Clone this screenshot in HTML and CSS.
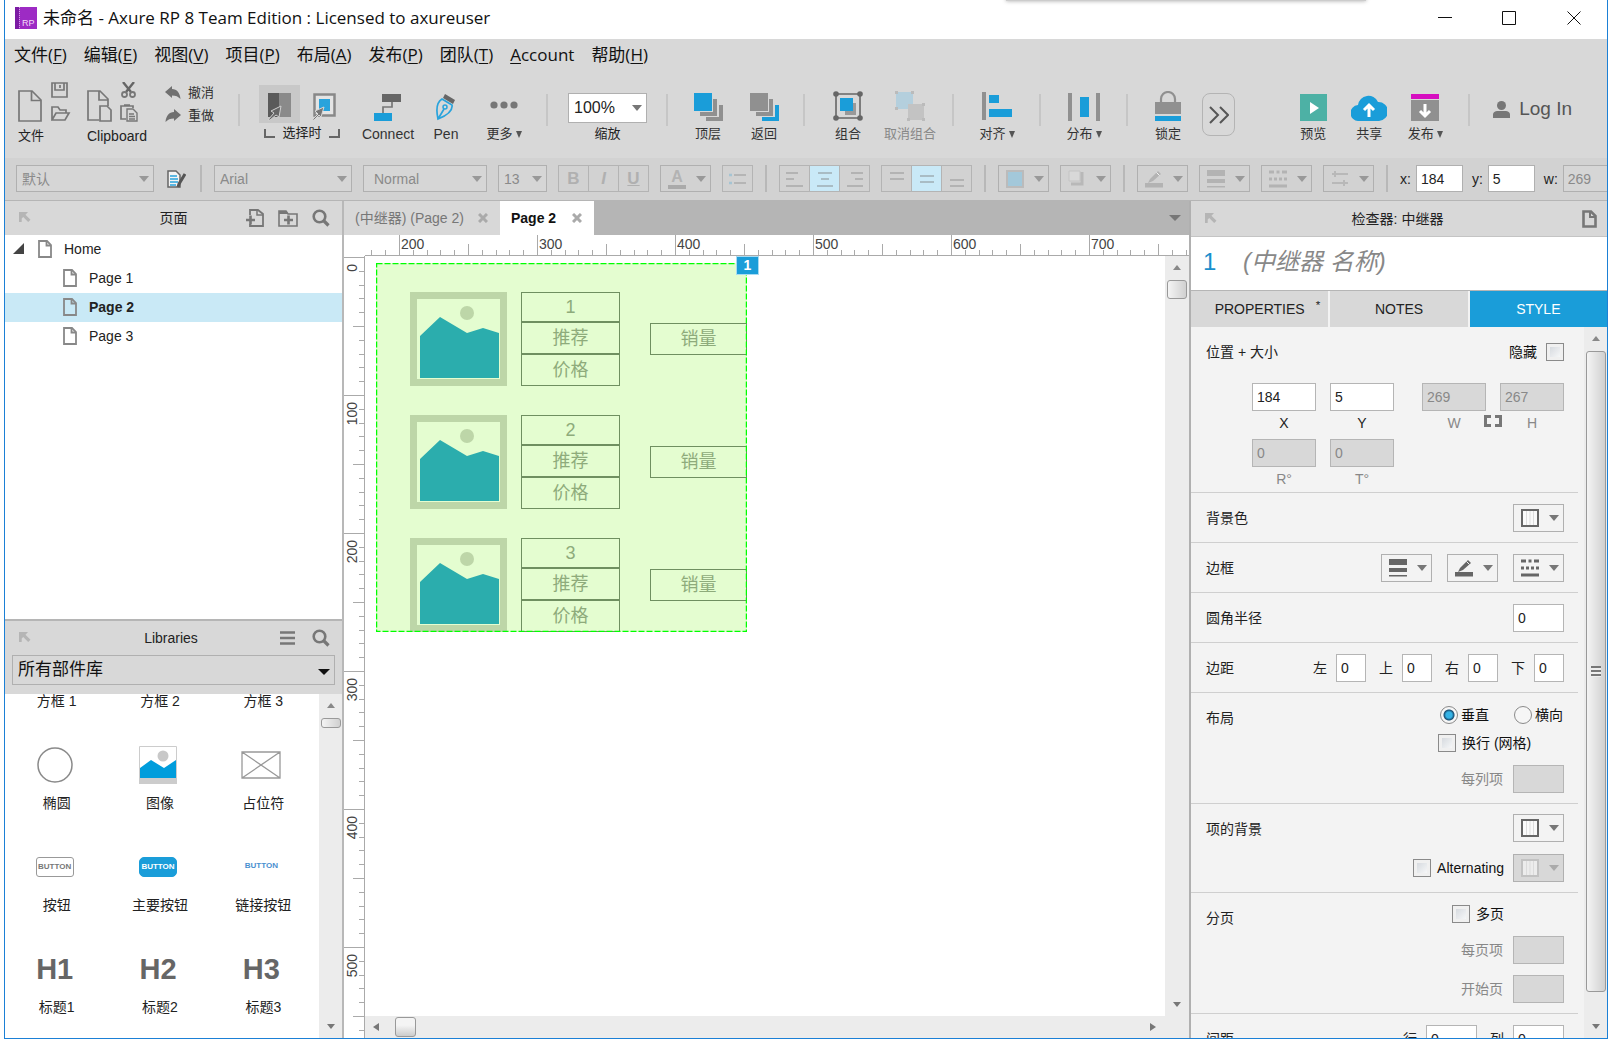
FILE: index.html
```html
<!DOCTYPE html>
<html lang="zh-CN">
<head>
<meta charset="utf-8">
<title>未命名 - Axure RP 8 Team Edition</title>
<link rel="stylesheet" href="styles.css">
</head>
<body>
<svg class="defs" width="0" height="0" aria-hidden="true">
  <defs>
    <symbol id="page" viewBox="0 0 14 18"><path d="M1 1h8l4 4v12H1z" fill="none" stroke="currentColor" stroke-width="1.800"/><path d="M8.500 1v4.500H13" fill="none" stroke="currentColor" stroke-width="1.800"/></symbol>
    <symbol id="pop" viewBox="0 0 12 12"><path d="M0 0h9L6.500 2.700l5 5-2.300 2.300-5-5L2.700 6.500V10H0z" fill="currentColor"/></symbol>
    <symbol id="search" viewBox="0 0 18 18"><circle cx="7.500" cy="7.500" r="5.800" fill="none" stroke="currentColor" stroke-width="2.600"/><path d="M11.500 11.500l5 5" stroke="currentColor" stroke-width="3.200"/></symbol>
    <symbol id="close" viewBox="0 0 10 10"><path d="M1 1l8 8M9 1l-8 8" stroke="currentColor" stroke-width="3"/></symbol>
    <symbol id="swatch" viewBox="0 0 18 18"><path d="M1 1h16v16H1z" fill="#fafafa" stroke="currentColor" stroke-width="2"/><path d="M5.500 2v14M9 2v14M12.500 2v14" stroke="#ddd"/></symbol>
    <symbol id="weights" viewBox="0 0 18 18"><path d="M0 0h18v6H0zM0 9h18v4H0zM0 16h18v1.500H0z" fill="currentColor"/></symbol>
    <symbol id="pen-line" viewBox="0 0 18 18"><path d="M0 13h18v4.500H0z" fill="currentColor"/><path d="M3 13l2-4 8-8 3 3-8 7z" fill="currentColor"/><path d="M11.500 2.500l3 3" stroke="#f3f3f3"/></symbol>
    <symbol id="dashes" viewBox="0 0 18 18"><path d="M0 2h5M7.500 2h3M13 2h5" stroke="currentColor" stroke-width="3"/><path d="M0 9h18" stroke="currentColor" stroke-width="3" stroke-dasharray="3 2"/><path d="M0 16h18" stroke="currentColor" stroke-width="3"/></symbol>
    <symbol id="photo" viewBox="0 0 97 94"><path d="M0 0h97v94H0z" fill="#bdd6a8"/><path d="M7 7h83v80H7z" fill="#e4fdd0"/><circle cx="57" cy="21" r="7" fill="#bdd6a8"/><path d="M10 44l20-19 27 16 16-5 16 5v45H10z" fill="#2badad"/></symbol>
  </defs>
</svg>

<div class="window">
  <div class="peek"></div>
  <header class="titlebar">
    <svg class="logo" width="22" height="22" viewBox="0 0 22 22"><path d="M0 0h22v22H0z" fill="#9d2bc4"/><path d="M0 0h4v22H0z" fill="#7b1ba3"/><path d="M4.500 0v22" stroke="#d79be8" stroke-dasharray="1 1"/><text x="7" y="19" font-size="9" fill="#f2dcf8">RP</text></svg>
    <h1>未命名 - Axure RP 8 Team Edition : Licensed to axureuser</h1>
    <div class="winbtns">
      <button aria-label="最小化"><svg width="14" height="14"><path d="M0 6.500h14" stroke="#111"/></svg></button>
      <button aria-label="最大化"><svg width="14" height="14"><path d="M.5.500h13v13H.5z" fill="none" stroke="#111"/></svg></button>
      <button aria-label="关闭"><svg width="14" height="14"><path d="M.5.500l13 13M13.500.500l-13 13" stroke="#111"/></svg></button>
    </div>
  </header>

  <nav class="menu">
    <a href="#">文件(<u>F</u>)</a><a href="#">编辑(<u>E</u>)</a><a href="#">视图(<u>V</u>)</a><a href="#">项目(<u>P</u>)</a><a href="#">布局(<u>A</u>)</a><a href="#">发布(<u>P</u>)</a><a href="#">团队(<u>T</u>)</a><a href="#"><u>A</u>ccount</a><a href="#">帮助(<u>H</u>)</a>
  </nav>

  <div class="toolbar">
    <div class="cluster file">
      <div class="cluster-icons">
        <svg width="24" height="32" viewBox="0 0 24 32"><path d="M1 1h13l9 9v21H1z" fill="none" stroke="#777" stroke-width="1.700"/><path d="M13.500 1v9.500H23" fill="none" stroke="#777" stroke-width="1.700"/></svg>
        <div class="pair">
          <svg width="20" height="16" viewBox="0 0 20 16"><path d="M1 1h15v14H1zM4 1v7h9V1M9 3v3" fill="none" stroke="#777" stroke-width="1.700"/></svg>
          <svg width="20" height="16" viewBox="0 0 20 16"><path d="M1 14V1h6l2 3h6v3M1 14L5 7h13l-4 7z" fill="none" stroke="#777" stroke-width="1.700"/></svg>
        </div>
      </div>
      <span>文件</span>
    </div>
    <div class="cluster clip">
      <div class="cluster-icons">
        <svg width="25" height="32" viewBox="0 0 25 32"><path d="M12 30H1V1h12l8 8v7M12 1v9h9" fill="none" stroke="#777" stroke-width="1.700"/><path d="M13 16h7l4 4v11H13z" fill="none" stroke="#777" stroke-width="1.700"/></svg>
        <div class="pair">
          <svg width="18" height="16" viewBox="0 0 18 16"><path d="M3 0l8 10M14 0L6 10" stroke="#666" stroke-width="2.400"/><circle cx="4.500" cy="12.500" r="2.500" fill="none" stroke="#777" stroke-width="1.800"/><circle cx="12.500" cy="12.500" r="2.500" fill="none" stroke="#777" stroke-width="1.800"/></svg>
          <svg width="18" height="18" viewBox="0 0 18 18"><path d="M6 15H1V2h12v2M4 1h6" fill="none" stroke="#777" stroke-width="1.700"/><path d="M7 5h6l4 4v8H7zM9 10h5M9 12.500h6M9 15h6" fill="none" stroke="#777" stroke-width="1.400"/></svg>
        </div>
      </div>
      <span>Clipboard</span>
    </div>
    <div class="history">
      <button><svg width="16" height="14" viewBox="0 0 16 14"><path d="M7 0v3c5 0 8 4 8.500 10C13 10.500 11 9.500 7 9.500V12L0 6z" fill="#707070"/></svg>撤消</button>
      <button><svg width="16" height="14" viewBox="0 0 16 14"><path d="M9 0v3C4 3 1 7 .5 13 3 10.500 5 9.500 9 9.500V12l7-6z" fill="#707070"/></svg>重做</button>
    </div>
    <i class="sep"></i>
    <div class="select-mode">
      <div class="modes">
        <button class="on" aria-label="相交选中"><svg width="24" height="28" viewBox="0 0 24 28"><path d="M0 0h11v24H0z" fill="#5a5a5a"/><path d="M11 0h12v24H11z" fill="#8a8a8a"/><path d="M0 27l6-7-3-2 10-5-2 11-3-2-6 5z" fill="#666" stroke="#d0d0d0"/></svg></button>
        <button aria-label="包含选中"><svg width="24" height="28" viewBox="0 0 24 28"><path d="M2.500 1.500h20v21h-20z" fill="#e4e4e4" stroke="#888" stroke-width="2.500"/><path d="M7 6h11v12H7z" fill="#29a3dc"/><path d="M0 27l6-6-3-3 9-4-3 10-2-2-5 5z" fill="#777" stroke="#d8d8d8"/></svg></button>
      </div>
      <div class="mode-label"><i class="lb"></i>选择时<i class="rb"></i></div>
    </div>
    <div class="tools wide">
      <button class="tool"><svg width="28" height="27" viewBox="0 0 28 27"><path d="M8 0h19v8H8z" fill="#666"/><path d="M18 8v5H9v6" fill="none" stroke="#777" stroke-width="1.700"/><path d="M0 19h18v8H0z" fill="#1a9dd9"/></svg><span class="latin">Connect</span></button>
      <button class="tool"><svg width="20" height="28" viewBox="0 0 20 28"><path d="M9 1l10 6-2 4L7 5z" fill="#666"/><path d="M6 6l10 6c1 6-4 10-14 14C0 17 1 9 6 6zM2 26l6-10" fill="none" stroke="#29a3dc" stroke-width="1.700"/><circle cx="9" cy="14" r="2" fill="none" stroke="#29a3dc" stroke-width="1.500"/></svg><span class="latin">Pen</span></button>
      <button class="tool"><svg width="28" height="20" viewBox="0 0 28 20"><g fill="#777"><circle cx="4" cy="4" r="3.600"/><circle cx="14" cy="4" r="3.600"/><circle cx="24" cy="4" r="3.600"/></g></svg><span>更多<b class="dd"></b></span></button>
    </div>
    <i class="sep"></i>
    <div class="zoom">
      <select id="zoom"><option>100%</option></select>
      <label for="zoom">缩放</label>
    </div>
    <i class="sep"></i>
    <div class="tools">
      <button class="tool"><svg width="29" height="28" viewBox="0 0 29 28"><path d="M0 0h18v18H0z" fill="#1a9dd9"/><path d="M19 6h4v17H6v-4h13zM25 12h4v16H12v-4h13z" fill="#909090"/></svg><span>顶层</span></button>
      <button class="tool"><svg width="29" height="28" viewBox="0 0 29 28"><path d="M0 0h18v18H0zM19 6h4v17H6v-4h13z" fill="#909090"/><path d="M25 12h4v16H12v-4h13z" fill="#1a9dd9"/></svg><span>返回</span></button>
    </div>
    <i class="sep"></i>
    <div class="tools broad">
      <button class="tool"><svg width="30" height="30" viewBox="0 0 30 30"><path d="M12 12h11v12H12z" fill="#999"/><path d="M7 7h13v13H7z" fill="#1a9dd9"/><path d="M3 3h24v24H3z" fill="none" stroke="#666" stroke-width="1.600"/><g fill="#666"><circle cx="3" cy="3" r="2.800"/><circle cx="27" cy="3" r="2.800"/><circle cx="3" cy="27" r="2.800"/><circle cx="27" cy="27" r="2.800"/></g></svg><span>组合</span></button>
      <button class="tool" disabled><svg width="30" height="30" viewBox="0 0 30 30"><path d="M1 1h17v17H1z" fill="#b4cfdd"/><path d="M13 13h16v16H13z" fill="#c3c3c3"/><path d="M0 0h3v3H0zM16 0h3v3h-3zM0 16h3v3H0zM27 12h3v3h-3zM27 27h3v3h-3zM12 27h3v3h-3z" fill="#bbb"/></svg><span>取消组合</span></button>
    </div>
    <i class="sep"></i>
    <div class="tools broad">
      <button class="tool"><svg width="30" height="30" viewBox="0 0 30 30"><path d="M0 1h4v28H0z" fill="#909090"/><path d="M7 4h10v8H7zM7 18h23v8H7z" fill="#1a9dd9"/></svg><span>对齐<b class="dd"></b></span></button>
    </div>
    <i class="sep"></i>
    <div class="tools broad">
      <button class="tool"><svg width="32" height="28" viewBox="0 0 32 28"><path d="M0 0h4v28H0zM28 0h4v28h-4z" fill="#909090"/><path d="M12 4h9v20h-9z" fill="#1a9dd9"/></svg><span>分布<b class="dd"></b></span></button>
    </div>
    <i class="sep"></i>
    <div class="tools">
      <button class="tool"><svg width="26" height="30" viewBox="0 0 26 30"><path d="M6 12V8a7 7 0 0 1 14 0v4" fill="none" stroke="#909090" stroke-width="2.200"/><path d="M0 11h26v12H0z" fill="#909090"/><path d="M0 25h26v5H0z" fill="#1a9dd9"/></svg><span>锁定</span></button>
    </div>
    <button class="more" aria-label="更多工具"><svg width="20" height="18" viewBox="0 0 20 18"><path d="M1 1l8 8-8 8M11 1l8 8-8 8" fill="none" stroke="#555" stroke-width="2"/></svg></button>
    <div class="tools publish">
      <button class="tool"><svg width="27" height="27" viewBox="0 0 27 27"><path d="M0 0h27v27H0z" fill="#4db1a5"/><path d="M10 8l9 6-9 6z" fill="#fff"/></svg><span>预览</span></button>
      <button class="tool"><svg width="36" height="27" viewBox="0 0 36 27"><path d="M8 27a8 8 0 0 1-1-16A10.500 10.500 0 0 1 27 8a9.500 9.500 0 0 1 1 19z" fill="#1a9dd9"/><path d="M18 23V11M13 16l5-5 5 5" fill="none" stroke="#fff" stroke-width="3"/></svg><span>共享</span></button>
      <button class="tool"><svg width="28" height="27" viewBox="0 0 28 27"><path d="M0 0h28v5H0z" fill="#d60ec0"/><path d="M0 6h28v21H0z" fill="#909090"/><path d="M14 10v12M9 17l5 5 5-5" fill="none" stroke="#fff" stroke-width="3"/></svg><span>发布<b class="dd"></b></span></button>
    </div>
    <i class="sep"></i>
    <button class="login"><svg width="17" height="17" viewBox="0 0 17 17"><circle cx="8.500" cy="4.500" r="4.500" fill="#777"/><path d="M0 17v-3c0-3 2-4 5-4h7c3 0 5 1 5 4v3z" fill="#777"/></svg>Log In</button>
  </div>

  <div class="format">
    <select class="w-style" disabled aria-label="样式"><option>默认</option></select>
    <button class="plain" aria-label="管理样式"><svg width="19" height="18" viewBox="0 0 19 18"><path d="M1 1h8l4 4v12H1z" fill="#f4f4f4" stroke="#666" stroke-width="1.500"/><path d="M3 6h7M3 9h8M3 12h8M3 15h6" stroke="#29a3dc" stroke-width="1.700"/><path d="M18 4l-6 10-1 3" stroke="#555" stroke-width="3" fill="none"/></svg></button>
    <i class="vbar"></i>
    <select class="w-style" disabled aria-label="字体"><option>Arial</option></select>
    <select class="w-weight" disabled aria-label="字型"><option>Normal</option></select>
    <select class="w-size" disabled aria-label="字号"><option>13</option></select>
    <div class="seg"><button disabled><b>B</b></button><button disabled><em>I</em></button><button disabled><u>U</u></button></div>
    <button class="drop" disabled aria-label="文字颜色"><span class="acolor">A</span></button>
    <div class="seg"><button disabled aria-label="项目符号"><svg width="18" height="14"><path d="M0 3h3M0 11h3" stroke="#a5c4d3" stroke-width="2.500"/><path d="M5 3h12M5 11h12" stroke="#b5b5b5" stroke-width="2"/></svg></button></div>
    <i class="vbar"></i>
    <div class="seg">
      <button disabled aria-label="左对齐"><svg width="18" height="18"><path d="M0 3h12M0 9h8M0 16h17" stroke="#b3b3b3" stroke-width="2"/></svg></button>
      <button class="on" disabled aria-label="居中"><svg width="18" height="18"><path d="M2 3h14M5 9h8M1 16h16" stroke="#a9bcc4" stroke-width="2"/></svg></button>
      <button disabled aria-label="右对齐"><svg width="18" height="18"><path d="M5 3h12M9 9h8M1 16h16" stroke="#b3b3b3" stroke-width="2"/></svg></button>
    </div>
    <div class="seg">
      <button disabled aria-label="顶部对齐"><svg width="18" height="18"><path d="M2 3h14M2 9h14" stroke="#b3b3b3" stroke-width="2"/></svg></button>
      <button class="on" disabled aria-label="垂直居中"><svg width="18" height="18"><path d="M2 6h14M2 12h14" stroke="#a9bcc4" stroke-width="2"/></svg></button>
      <button disabled aria-label="底部对齐"><svg width="18" height="18"><path d="M2 10h14M2 16h14" stroke="#b3b3b3" stroke-width="2"/></svg></button>
    </div>
    <i class="vbar"></i>
    <button class="drop" disabled aria-label="填充"><svg width="18" height="18"><path d="M1 1h16v16H1z" fill="#a3c8da" stroke="#bbb" stroke-width="2"/></svg></button>
    <button class="drop" disabled aria-label="阴影"><svg width="18" height="18"><path d="M1 1h11v10H1z" fill="#d8d8d8" stroke="#c4c4c4"/><path d="M3 14h11V2" fill="none" stroke="#b8b8b8" stroke-width="3"/></svg></button>
    <i class="vbar"></i>
    <button class="drop" disabled aria-label="线条颜色"><svg width="18" height="18"><use href="#pen-line"/></svg></button>
    <button class="drop" disabled aria-label="线宽"><svg width="18" height="18"><use href="#weights"/></svg></button>
    <button class="drop" disabled aria-label="线型"><svg width="18" height="18"><use href="#dashes"/></svg></button>
    <button class="drop" disabled aria-label="箭头"><svg width="18" height="18"><path d="M1 4h16M1 13h16M4 1v6M13 10v6" stroke="#b8b8b8" stroke-width="2"/></svg></button>
    <i class="vbar"></i>
    <label class="coord">x:<input value="184"></label>
    <label class="coord">y:<input value="5"></label>
    <label class="coord">w:<input value="269" disabled></label>
  </div>

  <main class="work">
    <aside class="left">
      <section class="pages">
        <div class="phead"><svg class="pop" width="12" height="12"><use href="#pop"/></svg><h2>页面</h2>
          <div class="pacts">
            <button aria-label="添加页面"><svg width="18" height="18" viewBox="0 0 18 18"><path d="M4 6V1h8l5 4v12H4v-2" fill="none" stroke="#777" stroke-width="1.800"/><path d="M11 1v5h6" fill="none" stroke="#777" stroke-width="1.500"/><path d="M0 11h9M4.500 6.500v9" stroke="#777" stroke-width="2.600"/></svg></button>
            <button aria-label="添加文件夹"><svg width="20" height="18" viewBox="0 0 20 18"><path d="M1 17V2h7l2 3h9v12z" fill="none" stroke="#777" stroke-width="1.600"/><path d="M1 2h7l2 3H1z" fill="#777"/><path d="M6 11h9M10.500 6.500v9" stroke="#777" stroke-width="2.600"/></svg></button>
            <button aria-label="搜索"><svg width="18" height="18"><use href="#search"/></svg></button>
          </div>
        </div>
        <ul class="tree">
          <li><svg class="twist" width="11" height="11"><path d="M11 0v11H0z" fill="#444"/></svg><svg width="14" height="18"><use href="#page"/></svg>Home</li>
          <li class="child"><svg width="14" height="18"><use href="#page"/></svg>Page 1</li>
          <li class="child current"><svg width="14" height="18"><use href="#page"/></svg>Page 2</li>
          <li class="child"><svg width="14" height="18"><use href="#page"/></svg>Page 3</li>
        </ul>
      </section>
      <section class="libs">
        <div class="phead"><svg class="pop" width="12" height="12"><use href="#pop"/></svg><h2>Libraries</h2>
          <div class="pacts">
            <button aria-label="菜单"><svg width="15" height="14"><path d="M0 1.500h15M0 7h15M0 12.500h15" stroke="#777" stroke-width="2.600"/></svg></button>
            <button aria-label="搜索"><svg width="18" height="18"><use href="#search"/></svg></button>
          </div>
        </div>
        <div class="libpick"><select aria-label="部件库"><option>所有部件库</option></select></div>
        <div class="libbody">
          <div class="grid">
            <span>方框 1</span><span>方框 2</span><span>方框 3</span>
            <figure><div><svg width="36" height="36"><circle cx="18" cy="18" r="17" fill="none" stroke="#8a8a8a" stroke-width="1.500"/></svg></div><figcaption>椭圆</figcaption></figure>
            <figure><div><svg width="38" height="38"><path d="M.5.500h37v37H.5z" fill="#fff" stroke="#ccc"/><circle cx="24" cy="10" r="5.500" fill="#c8c8c8"/><path d="M1 22l11-8 13 8 12-8v18H1z" fill="#009ddc"/><path d="M0 32h38v6H0z" fill="#ccc"/></svg></div><figcaption>图像</figcaption></figure>
            <figure><div><svg width="40" height="28"><path d="M1 1h38v26H1zM1 1l38 26M39 1L1 27" fill="none" stroke="#999" stroke-width="1.300"/></svg></div><figcaption>占位符</figcaption></figure>
            <figure><div><span class="bt">BUTTON</span></div><figcaption>按钮</figcaption></figure>
            <figure><div><span class="bt primary">BUTTON</span></div><figcaption>主要按钮</figcaption></figure>
            <figure><div><span class="bt link">BUTTON</span></div><figcaption>链接按钮</figcaption></figure>
            <figure><div class="hx">H1</div><figcaption>标题1</figcaption></figure>
            <figure><div class="hx">H2</div><figcaption>标题2</figcaption></figure>
            <figure><div class="hx">H3</div><figcaption>标题3</figcaption></figure>
          </div>
          <div class="vscroll"><i class="up"></i><i class="thumb small"></i><i class="down"></i></div>
        </div>
      </section>
    </aside>

    <section class="center">
      <div class="tabs">
        <div class="tab">(中继器) (Page 2)<svg width="10" height="10"><use href="#close"/></svg></div>
        <div class="tab active">Page 2<svg width="10" height="10"><use href="#close"/></svg></div>
        <i class="tri"></i>
      </div>
      <svg class="hruler" width="100%" height="21">
        <defs><pattern id="ht" x="55" width="138" height="21" patternUnits="userSpaceOnUse"><path d="M.5 0v21M69.500 9v12M14.500 15v6M28.500 15v6M41.500 15v6M55.500 15v6M83.500 15v6M97.500 15v6M110.500 15v6M124.500 15v6" stroke="#aaa"/></pattern></defs>
        <rect x="22" width="100%" height="21" fill="url(#ht)"/><path d="M21 20.500h2000" stroke="#aaa"/>
        <text x="57" y="14">200</text><text x="195" y="14">300</text><text x="333" y="14">400</text><text x="471" y="14">500</text><text x="609" y="14">600</text><text x="747" y="14">700</text>
      </svg>
      <div class="stage">
        <svg class="vruler" width="21" height="100%">
          <defs><pattern id="vt" y="1" width="21" height="138" patternUnits="userSpaceOnUse"><path d="M0 .5h21M9 69.500h12M15 14.500h6M15 28.500h6M15 41.500h6M15 55.500h6M15 83.500h6M15 97.500h6M15 110.500h6M15 124.500h6" stroke="#aaa"/></pattern></defs>
          <rect width="21" height="100%" fill="url(#vt)"/><path d="M20.500 0v2000" stroke="#aaa"/>
          <g text-anchor="end"><text transform="translate(13 8) rotate(-90)">0</text><text transform="translate(13 146) rotate(-90)">100</text><text transform="translate(13 284) rotate(-90)">200</text><text transform="translate(13 422) rotate(-90)">300</text><text transform="translate(13 560) rotate(-90)">400</text><text transform="translate(13 698) rotate(-90)">500</text></g>
        </svg>
        <div class="canvas">
          <div class="repeater">
            <div class="row"><svg width="97" height="94"><use href="#photo"/></svg><div class="cells"><span>1</span><span>推荐</span><span>价格</span></div><span class="sales">销量</span></div>
            <div class="row"><svg width="97" height="94"><use href="#photo"/></svg><div class="cells"><span>2</span><span>推荐</span><span>价格</span></div><span class="sales">销量</span></div>
            <div class="row"><svg width="97" height="94"><use href="#photo"/></svg><div class="cells"><span>3</span><span>推荐</span><span>价格</span></div><span class="sales">销量</span></div>
          </div>
          <svg class="outline" width="371" height="369"><path d="M.5.500h370v368H.5z" fill="none" stroke="#0f0" stroke-width="1.500" stroke-dasharray="6 2"/></svg>
          <span class="badge">1</span>
        </div>
        <div class="vscroll"><i class="up"></i><i class="thumb mid"></i><i class="down"></i></div>
        <div class="hscroll"><i class="lt"></i><i class="hthumb"></i><i class="rt"></i></div>
      </div>
    </section>

    <aside class="right">
      <div class="phead"><svg class="pop" width="12" height="12"><use href="#pop"/></svg><h2>检查器: 中继器</h2><div class="pacts"><button aria-label="页面"><svg width="15" height="18" viewBox="0 0 15 18"><path d="M1.500 1.500H9l4.500 4.500v10.500h-12z" fill="none" stroke="#777" stroke-width="2.600"/><path d="M8 1v6h6" fill="none" stroke="#777" stroke-width="2"/></svg></button></div></div>
      <div class="name"><span>1</span><input aria-label="名称" placeholder="(中继器 名称)"></div>
      <div class="itabs"><button>PROPERTIES<sup>*</sup></button><button>NOTES</button><button class="on">STYLE</button></div>
      <div class="ibody">
        <div class="props">
          <section class="pos">
            <div class="line"><h3>位置 + 大小</h3><label class="ck">隐藏<input type="checkbox"></label></div>
            <div class="dims">
              <label><input value="184">X</label><label><input value="5">Y</label><label class="off"><input value="269" disabled>W</label><label class="off"><input value="267" disabled>H</label>
              <svg class="chain" width="18" height="12"><path d="M7 1.500H1.500v9H7M11 1.500h5.500v9H11" fill="none" stroke="#777" stroke-width="3"/></svg>
              <label class="off"><input value="0" disabled>R°</label><label class="off"><input value="0" disabled>T°</label>
            </div>
          </section>
          <section class="line"><h3>背景色</h3><button class="drop" aria-label="背景色"><svg width="18" height="18"><use href="#swatch"/></svg></button></section>
          <section class="line"><h3>边框</h3><button class="drop" aria-label="线宽"><svg width="18" height="18"><use href="#weights"/></svg></button><button class="drop" aria-label="线条颜色"><svg width="18" height="18"><use href="#pen-line"/></svg></button><button class="drop" aria-label="线型"><svg width="18" height="18"><use href="#dashes"/></svg></button></section>
          <section class="line"><h3><label for="radius">圆角半径</label></h3><input id="radius" class="box" value="0"></section>
          <section class="line"><h3>边距</h3><label class="edge">左<input value="0"></label><label class="edge">上<input value="0"></label><label class="edge">右<input value="0"></label><label class="edge">下<input value="0"></label></section>
          <section class="multi"><h3>布局</h3>
            <div class="opts">
              <div class="radios"><label class="ck"><input type="radio" name="dir" checked>垂直</label><label class="ck"><input type="radio" name="dir">横向</label></div>
              <label class="ck wrap"><input type="checkbox">换行 (网格)</label>
              <label class="off perrow">每列项<input class="box" disabled></label>
            </div>
          </section>
          <section class="multi"><h3>项的背景</h3>
            <div class="opts alt">
              <button class="drop" aria-label="项的背景"><svg width="18" height="18"><use href="#swatch"/></svg></button>
              <div class="altrow"><label class="ck"><input type="checkbox">Alternating</label><button class="drop" disabled aria-label="交替背景"><svg width="18" height="18" opacity="0.600"><use href="#swatch"/></svg></button></div>
            </div>
          </section>
          <section class="multi"><h3>分页</h3>
            <div class="opts paging">
              <label class="ck"><input type="checkbox">多页</label>
              <label class="off perrow">每页项<input class="box" disabled></label>
              <label class="off perrow">开始页<input class="box" disabled></label>
            </div>
          </section>
          <section class="line"><h3>间距</h3><label class="edge">行<input class="box" value="0"></label><label class="edge">列<input class="box" value="0"></label></section>
        </div>
        <div class="vscroll"><i class="up"></i><i class="thumb long"></i><i class="down"></i></div>
      </div>
    </aside>
  </main>
</div>
</body>
</html>
```
FILE: styles.css
```css
* { box-sizing: border-box; }
body {
  margin: 0;
  height: 100vh;
  padding: 0 8px 14px 4px;
  background: #fff;
  color: #222;
  font: 14px/20px "Liberation Sans", "Noto Sans CJK SC", sans-serif;
  overflow: hidden;
}
h1, h2, h3, ul, figure { margin: 0; padding: 0; font-weight: normal; font-size: inherit; }
button, input, select { font: inherit; color: inherit; margin: 0; padding: 0; border: 0; background: none; border-radius: 0; }
svg { display: block; flex: none; }
.defs { position: absolute; }
.window {
  position: relative;
  display: flex;
  flex-direction: column;
  height: 100%;
  border: 1px solid #1b80d6;
  border-top: 0;
  overflow: hidden;
}
.peek { position: absolute; top: -4px; left: 62.500%; width: 360px; height: 5px; background: #ccc; box-shadow: 0 0 4px #aaa; }

/* title and menu */
.titlebar { display: flex; align-items: center; flex: none; height: 39px; padding: 0 0 4px 10px; background: #fff; color: #111; }
.titlebar h1 { flex: 1; margin-left: 6px; font: 17px/24px "Open Sans", "Noto Sans CJK SC", sans-serif; }
.winbtns { display: flex; }
.winbtns button { display: grid; place-items: center; width: 64px; height: 35px; }
.winbtns button:last-child { width: 66px; }
.menu { display: flex; flex: none; gap: 17px; height: 32px; padding-left: 9px; align-items: center; background: #d8d8d8; font: 17px/24px "Open Sans", "Noto Sans CJK SC", sans-serif; }
.menu a { color: #111; text-decoration: none; }
.menu u { text-underline-offset: 2px; }

/* main toolbar */
.toolbar { display: flex; flex: none; height: 87px; padding-left: 13px; background: #d8d8d8; font-size: 13px; overflow: hidden; }
.toolbar > * { flex: none; }
.cluster { padding-top: 11px; }
.cluster > span { display: block; line-height: 18px; margin-top: 5px; }
.cluster-icons { display: flex; gap: 9px; align-items: flex-end; height: 40px; }
.pair { display: flex; flex-direction: column; justify-content: space-between; height: 40px; }
.file { width: 69px; }
.clip { width: 78px; font-size: 14px; }
.clip .cluster-icons { gap: 8px; }
.history { display: flex; flex-direction: column; gap: 3px; width: 62px; padding-top: 12px; }
.history button { display: flex; align-items: center; gap: 7px; height: 20px; color: #333; }
.sep { width: 2px; height: 32px; margin: 23px 12px 0 11px; background: #c6c6c6; }
.select-mode { width: 107px; padding: 14px 14px 0 7px; }
.modes { display: flex; gap: 3px; }
.modes button { display: grid; place-items: center; width: 41px; height: 38px; padding-top: 6px; }
.modes .on { background: #c8c8c8; }
.mode-label { display: flex; justify-content: center; align-items: center; gap: 7px; width: 86px; line-height: 20px; }
.mode-label i { width: 11px; height: 9px; border-bottom: 2px solid #666; }
.lb { border-left: 2px solid #666; }
.rb { border-right: 2px solid #666; }
.tools { display: flex; }
.tool { display: flex; flex-direction: column; align-items: center; justify-content: flex-end; width: 56px; height: 72px; padding: 0; color: #333; }
.tool span { line-height: 18px; margin-top: 4px; white-space: nowrap; }
.tool:disabled span { color: #888; }
.wide { padding-right: 2px; }
.wide .tool { width: 58px; }
.broad .tool { width: 62px; }
.latin { font-size: 14px; }
.dd { display: inline-block; margin-left: 3px; border: 3px solid transparent; border-top: 7px solid #555; border-bottom: 0; }
.zoom { display: flex; flex-direction: column; align-items: center; gap: 1px; padding: 22px 8px 0; }
.zoom label { line-height: 20px; }
select { appearance: none; border: 1px solid #b0b0b0; }
.zoom select { width: 79px; height: 30px; padding-left: 5px; font-size: 16px; background: #fff url("data:image/svg+xml,%3Csvg xmlns='http://www.w3.org/2000/svg' width='10' height='6'%3E%3Cpath d='M0 0h10L5 6z' fill='%23777'/%3E%3C/svg%3E") no-repeat right 4px center; }
.more { align-self: flex-start; display: grid; place-items: center; width: 33px; height: 43px; margin: 22px 0 0 6px; border: 1px solid #b4b4b4; border-radius: 8px; }
.toolbar > .publish { margin-left: auto; padding-right: 4px; }
.login { display: flex; align-items: center; gap: 9px; height: 76px; margin: 0 35px 0 11px; font-size: 19px; color: #555; }

/* format bar */
.format { display: flex; flex: none; align-items: center; gap: 11px; height: 43px; padding: 0 0 1px 11px; border-bottom: 1px solid #b5b5b5; background: #d2d2d2; overflow: hidden; }
.format > * { flex: none; }
.format select { height: 27px; padding-left: 5px; color: #8a8a8a; opacity: 1; background: #d6d6d6 url("data:image/svg+xml,%3Csvg xmlns='http://www.w3.org/2000/svg' width='10' height='6'%3E%3Cpath d='M0 0h10L5 6z' fill='%23999'/%3E%3C/svg%3E") no-repeat right 4px center; }
.w-style { width: 138px; }
.plain { padding: 0 2px; }
.format .w-weight { width: 124px; padding-left: 10px; }
.w-size { width: 49px; }
.vbar { width: 2px; height: 27px; margin: 0 1px; background: #b8b8b8; }
.seg { display: flex; border: 1px solid #b4b4b4; }
.seg button { display: grid; place-items: center; width: 29px; height: 25px; color: #b0b0b0; font-size: 17px; }
.seg button + button { border-left: 1px solid #b4b4b4; width: 30px; }
.seg .on { background: #c9e9f7; }
.seg u, .seg em { font-weight: bold; }
.drop { display: flex; align-items: center; justify-content: space-between; width: 51px; height: 28px; padding: 0 4px 0 7px; border: 1px solid #b0b0b0; color: #666; }
.drop::after { content: ""; border: 5px solid transparent; border-top: 6px solid #777; border-bottom: 0; }
.format .drop { height: 27px; color: #b3b3b3; }
.format .drop::after { border-top-color: #999; }
.acolor { width: 18px; height: 20px; border-bottom: 4px solid #aaa; font: bold 16px/16px "Liberation Sans", sans-serif; text-align: center; }
.coord { display: flex; align-items: center; gap: 5px; }
.coord + .coord { margin-left: -2px; }
.coord input { width: 47px; height: 27px; padding-left: 4px; border: 1px solid #b0b0b0; background: #fff; color: #222; }
.coord input:disabled { background: #d6d6d6; color: #8a8a8a; }

/* work area */
.work { display: grid; grid-template-columns: 339px minmax(0, 1fr) 418px; flex: 1; min-height: 0; }
.left { display: flex; flex-direction: column; min-height: 0; border-right: 2px solid #b8b8b8; }
.phead { display: grid; grid-template-columns: 90px 1fr 90px; align-items: center; flex: none; height: 34px; background: #d8d8d8; }
.phead h2 { text-align: center; }
.pop { margin-left: 14px; color: #b5b5b5; }
.pacts { display: flex; justify-content: flex-end; align-items: center; gap: 14px; padding-right: 12px; color: #777; }
.pages { flex: 419 1 0; min-height: 0; background: #fff; border-bottom: 2px solid #b5b5b5; }
.tree { list-style: none; }
.tree li { display: flex; align-items: center; gap: 12px; height: 29px; padding: 0 0 2px 8px; }
.tree .child { padding-left: 58px; }
.tree .current { background: #c9e9f6; font-weight: bold; }
.tree li svg { color: #888; }
.twist { margin-right: 2px; }
.libs { display: flex; flex-direction: column; flex: 418 1 0; min-height: 0; }
.libs h2 { padding-right: 5px; }
.libs .pacts { gap: 17px; }
.libpick { flex: none; padding: 0 7px 9px; background: #d8d8d8; }
.libpick select { display: block; width: 100%; height: 30px; padding-left: 5px; font-size: 17px; color: #111; background: url("data:image/svg+xml,%3Csvg xmlns='http://www.w3.org/2000/svg' width='12' height='6'%3E%3Cpath d='M0 0h12L6 6z' fill='%23111'/%3E%3C/svg%3E") no-repeat right 4px bottom 9px; }
.libbody { display: flex; flex: 1; min-height: 0; background: #fff; }
.grid { display: grid; flex: 1; grid-template-columns: repeat(3, 1fr); grid-template-rows: 20px repeat(3, 102px); padding-right: 4px; line-height: 14px; text-align: center; overflow: hidden; }
.grid figure { padding-top: 32px; line-height: 20px; }
.grid figure > div { display: grid; place-items: center; height: 38px; margin-right: 4px; }
.grid figcaption { margin-top: 9px; }
.bt { width: 38px; height: 20px; border: 1px solid #999; border-radius: 3px; color: #777; font: bold 8px/18px "Liberation Sans", sans-serif; }
.primary { border-color: #1a9dd9; border-radius: 5px; background: #1a9dd9; color: #fff; }
.link { border: 0; color: #4a90d0; }
.grid .hx { color: #666; font: bold 29px/38px "Liberation Sans", sans-serif; }

/* scroll bars */
.vscroll { display: flex; flex-direction: column; align-items: center; flex: none; width: 23px; padding: 9px 0; background: #ececec; }
.vscroll .up { border: 4px solid transparent; border-top: 0; border-bottom: 5px solid #888; }
.vscroll .down { margin-top: auto; border: 4px solid transparent; border-bottom: 0; border-top: 5px solid #777; }
.thumb { width: 20px; margin-top: 10px; border: 1px solid #999; border-radius: 3px; background: linear-gradient(90deg, #f4f4f4, #d0d0d0); }
.small { height: 10px; }
.mid { height: 19px; }
.long { flex: 1; display: grid; place-items: center; margin-bottom: 32px; }
.long::after { content: ""; width: 10px; height: 11px; background: repeating-linear-gradient(#777 0 2px, #eee 2px 4px); }
.hscroll { display: flex; align-items: center; gap: 16px; padding: 0 9px 0 8px; grid-column: 2 / 4; background: #ececec; }
.lt { border: 4px solid transparent; border-left: 0; border-right: 6px solid #777; }
.rt { margin-left: auto; margin-right: 24px; border: 4px solid transparent; border-right: 0; border-left: 6px solid #777; }
.hthumb { width: 21px; height: 20px; border: 1px solid #999; border-radius: 3px; background: linear-gradient(#f4f4f4 40%, #ccc); }

/* canvas */
.center { display: flex; flex-direction: column; min-width: 0; min-height: 0; background: #fff; }
.tabs { display: flex; align-items: center; flex: none; height: 34px; background: #b5b5b5; }
.tab { display: flex; align-items: center; justify-content: space-between; height: 34px; width: 156px; padding: 0 12px 0 11px; background: #d8d8d8; color: #777; white-space: nowrap; }
.tab svg { color: #aaa; }
.active { width: 94px; background: #fff; color: #111; font-weight: bold; }
.tri { margin: 0 8px 0 auto; border: 6px solid transparent; border-top: 6px solid #777; border-bottom: 0; }
.hruler, .vruler { font-size: 14px; fill: #444; }
.stage { display: grid; grid-template: minmax(0, 1fr) 22px / 21px minmax(0, 1fr) 24px; flex: 1; min-height: 0; }
.vruler { grid-row: 1 / 3; height: 100%; }
.stage .vscroll { width: 24px; }
.canvas { position: relative; overflow: hidden; }
.repeater { position: absolute; left: 11px; top: 7px; display: flex; flex-direction: column; gap: 29px; width: 371px; height: 369px; padding-top: 29px; background: #e4fdd0; overflow: hidden; color: #8eab7b; font-size: 18px; }
.row { display: grid; flex: none; grid-template-columns: 97px 99px 96px; column-gap: 14px; padding-left: 34px; align-items: center; }
.row .sales { margin-left: 16px; width: 97px; }
.cells span, .sales { display: grid; place-items: center; height: 32px; border: 1px solid #6f8f60; }
.cells { display: grid; grid-template-rows: 30px 32px 32px; }
.cells span:first-child { height: 30px; }
.outline { position: absolute; left: 11px; top: 7px; }
.badge { position: absolute; left: 371px; top: 0; width: 23px; height: 19px; border: 1px solid #a8dbf2; background: #1a9dd9; color: #fff; font-weight: bold; line-height: 17px; text-align: center; }

/* inspector */
.right { display: flex; flex-direction: column; min-height: 0; border-left: 2px solid #b0b0b0; background: #f3f3f3; }
.right .phead { height: 35px; }
.right .phead h2 { padding-right: 3px; }
.right .pacts { padding-right: 10px; }
.name { display: flex; align-items: center; flex: none; height: 55px; padding: 0 0 4px 12px; border-top: 1px solid #c4c4c4; border-bottom: 1px solid #b5b5b5; background: #fff; font-size: 24px; }
.name span { width: 40px; color: #1a8fcc; }
.name input { flex: 1; min-width: 0; height: 40px; font-style: italic; outline: 0; }
.name input::placeholder { color: #888; opacity: 1; }
.itabs { display: grid; grid-template-columns: repeat(3, 1fr); gap: 2px; flex: none; height: 36px; background: #f3f3f3; }
.itabs button { position: relative; background: #d8d8d8; color: #222; }
.itabs sup { position: absolute; top: 4px; right: 8px; }
.itabs .on { background: #1a9dd9; color: #fff; }
.ibody { display: flex; flex: 1; min-height: 0; }
.props { flex: 1; padding-right: 6px; overflow: hidden; }
.props section { padding: 10px 14px 10px 15px; border-bottom: 1px solid #cfcfcf; }
.line { display: flex; align-items: center; gap: 15px; }
.line h3, .multi h3 { margin-right: auto; }
.props section.line { height: 50px; }
.props section.pos { height: 166px; padding-top: 15px; }
.dims { position: relative; display: grid; grid-template-columns: 64px 78px 64px 64px; gap: 3px 14px; justify-content: end; margin-top: 21px; }
.dims label { display: flex; flex-direction: column; align-items: center; width: 64px; height: 53px; line-height: 24px; }
.dims input { width: 64px; }
.props input:not([type]) { height: 28px; padding-left: 4px; border: 1px solid #b5b5b5; background: #fff; }
.props input:not([type]):disabled { background: #d8d8d8; }
.off, .off input { color: #888; }
.chain { position: absolute; right: 62px; top: 32px; }
.ck { display: flex; align-items: center; gap: 6px; color: #111; }
.pos .ck { gap: 9px; }
input[type=checkbox], input[type=radio] { appearance: none; flex: none; width: 18px; height: 18px; border: 1px solid #8a8a8a; background: linear-gradient(135deg, #cdd2d8, #fff); box-shadow: inset 0 0 0 3px #f0f0f0; }
input[type=radio] { border-radius: 50%; background: #f6f6f6; box-shadow: none; }
input[type=radio]:checked { background: radial-gradient(circle at 50% 50%, #35b3e6 0 3px, #174d72 5px, #f6f6f6 6px); }
.props .box { width: 51px; }
.props .edge { display: flex; align-items: center; gap: 9px; }
.edge input { width: 30px; }
.line .edge + .edge { margin-left: -2px; }
.multi { display: flex; align-items: flex-start; }
.multi h3 { padding-top: 5px; }
.opts { display: flex; flex-direction: column; width: 126px; }
.radios { display: flex; justify-content: space-between; padding: 2px 1px 0 2px; }
.radios .ck { gap: 3px; }
.wrap { margin: 8px 0 12px; }
.perrow { display: flex; align-items: center; justify-content: flex-end; gap: 10px; }
.alt { width: auto; align-items: flex-end; gap: 12px; }
.altrow { display: flex; gap: 9px; }
.altrow .drop:disabled { background: #d8d8d8; color: #b4b4b4; }
.altrow .drop:disabled::after { border-top-color: #aaa; }
.paging { gap: 11px; }
.paging .ck { justify-content: flex-end; margin-right: 60px; padding: 2px 0; height: 22px; }
```
